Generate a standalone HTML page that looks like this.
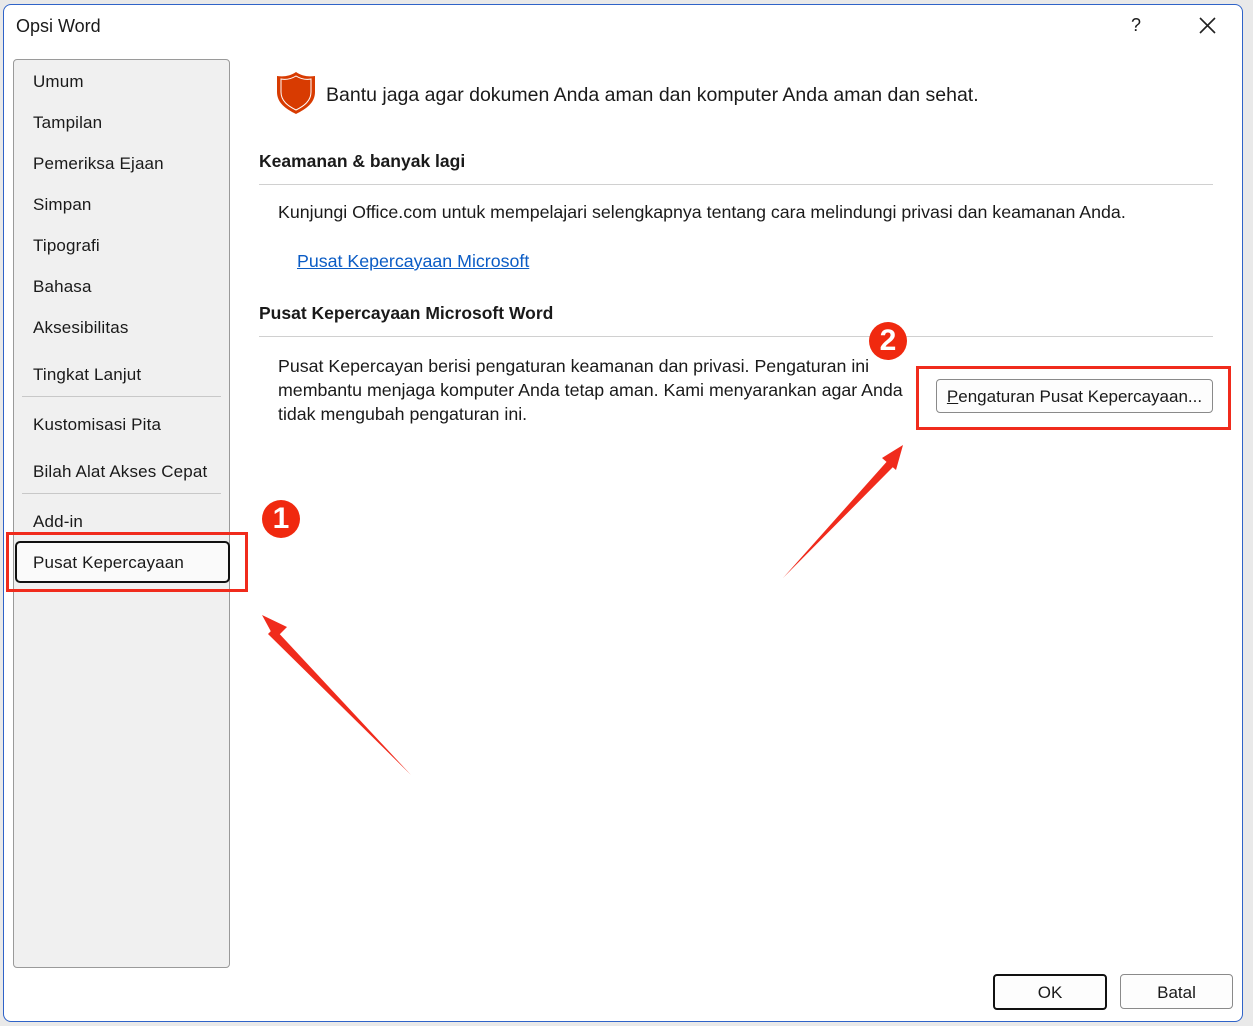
<!DOCTYPE html>
<html><head><meta charset="utf-8"><style>
body{margin:0;width:1253px;height:1026px;background:#e9e9e9;position:relative;overflow:hidden;font-family:"Liberation Sans",sans-serif;color:#1a1a1a}
.win{position:absolute;left:3px;top:4px;width:1238px;height:1016px;background:#fff;border:1.5px solid #2f63c8;border-radius:8px}
.a{position:absolute;white-space:nowrap}
.side{position:absolute;left:13px;top:59px;width:215px;height:907px;background:#f0f0f0;border:1px solid #9a9a9a;border-radius:4px}
.it{position:absolute;left:33px;font-size:17px;margin-top:2px;letter-spacing:0.15px}
.sep{position:absolute;left:22px;width:199px;height:1px;background:#c8c8c8}
.hr{position:absolute;left:259px;width:954px;height:1px;background:#d0d0d0}
.btn{position:absolute;border:1px solid #8a8a8a;border-radius:4px;background:#fdfdfd;font-size:17px;text-align:center}
.red{position:absolute;border:3px solid #f02b1c}
.badge{position:absolute;width:38px;height:38px;border-radius:50%;background:#f0290f;color:#fff;font-size:30px;font-weight:bold;text-align:center;line-height:38px}
.t{font-size:17.8px;margin-top:1px}
</style></head><body>
<div class="win"></div>
<div class="a" style="left:16px;top:16px;font-size:18px">Opsi Word</div>
<div class="a" style="left:1131px;top:15px;font-size:18px">?</div>
<svg class="a" style="left:1199px;top:17px" width="17" height="17"><path d="M1 1L16 16M16 1L1 16" stroke="#222" stroke-width="1.6"/></svg>
<div class="side"></div>
<div class="it" style="top:70px">Umum</div>
<div class="it" style="top:111px">Tampilan</div>
<div class="it" style="top:152px">Pemeriksa Ejaan</div>
<div class="it" style="top:193px">Simpan</div>
<div class="it" style="top:234px">Tipografi</div>
<div class="it" style="top:275px">Bahasa</div>
<div class="it" style="top:316px">Aksesibilitas</div>
<div class="sep" style="top:396px"></div>
<div class="it" style="top:363px">Tingkat Lanjut</div>
<div class="it" style="top:413px">Kustomisasi Pita</div>
<div class="it" style="top:460px">Bilah Alat Akses Cepat</div>
<div class="sep" style="top:493px"></div>
<div class="it" style="top:510px">Add-in</div>
<div class="a" style="left:15px;top:541px;width:211px;height:38px;border:2px solid #111;border-radius:5px;background:#fafafa"></div>
<div class="it" style="top:551px">Pusat Kepercayaan</div>
<div class="red" style="left:6px;top:532px;width:236px;height:54px"></div>
<div class="badge" style="left:262px;top:500px">1</div>
<svg class="a" style="left:274px;top:70px" width="44" height="46"><path d="M22 2C28 6 34 7 41 6V22C41 33 32 39 22 44C12 39 3 33 3 22V6C10 7 16 6 22 2Z" fill="#d83b01"/><path d="M22 6C27 9 32 10 37 9V22C37 31 30 36 22 40C14 36 7 31 7 22V9C12 10 17 9 22 6Z" fill="none" stroke="#fff" stroke-width="1"/></svg>
<div class="a" style="left:326px;top:84px;font-size:19.5px">Bantu jaga agar dokumen Anda aman dan komputer Anda aman dan sehat.</div>
<div class="a" style="left:259px;top:151px;font-size:17.5px;font-weight:bold">Keamanan &amp; banyak lagi</div>
<div class="hr" style="top:184px"></div>
<div class="a t" style="left:278px;top:201px">Kunjungi Office.com untuk mempelajari selengkapnya tentang cara melindungi privasi dan keamanan Anda.</div>
<div class="a t" style="left:297px;top:250px;color:#0b5cc5;text-decoration:underline">Pusat Kepercayaan Microsoft</div>
<div class="a" style="left:259px;top:303px;font-size:17.5px;font-weight:bold">Pusat Kepercayaan Microsoft Word</div>
<div class="hr" style="top:336px"></div>
<div class="a t" style="left:278px;top:353px;line-height:24px">Pusat Kepercayan berisi pengaturan keamanan dan privasi. Pengaturan ini<br>membantu menjaga komputer Anda tetap aman. Kami menyarankan agar Anda<br>tidak mengubah pengaturan ini.</div>
<div class="btn" style="left:936px;top:379px;width:275px;height:32px;line-height:34px"><u>P</u>engaturan Pusat Kepercayaan...</div>
<div class="red" style="left:916px;top:366px;width:309px;height:58px"></div>
<div class="badge" style="left:869px;top:322px">2</div>
<svg class="a" style="left:0;top:0" width="1253" height="1026">
<polygon points="411,775 274,628 268,634" fill="#f02b1c"/><polygon points="262,615 287,627 275,639" fill="#f02b1c"/>
<polygon points="783,578 890,458 896,464" fill="#f02b1c"/><polygon points="903,445 882,458 896,470" fill="#f02b1c"/>
</svg>
<div class="btn" style="left:993px;top:974px;width:110px;height:32px;line-height:34px;border:2px solid #111">OK</div>
<div class="btn" style="left:1120px;top:974px;width:111px;height:33px;line-height:35px">Batal</div>
</body></html>
